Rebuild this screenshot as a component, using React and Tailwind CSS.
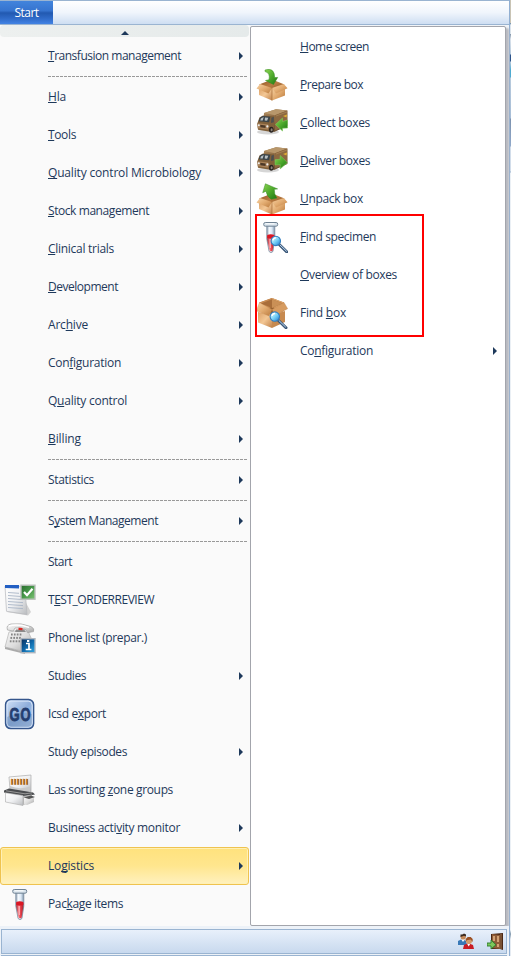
import React from "react";

// label, mnemonic index (-1 for none), has submenu, label width, icon
const left = [
  ["Transfusion management", 0, true, 133], "-",
  ["Hla", 0, true, 18], ["Tools", 0, true, 28], ["Quality control Microbiology", 0, true, 153],
  ["Stock management", 0, true, 101], ["Clinical trials", 0, true, 66], ["Development", 0, true, 70],
  ["Archive", 3, true, 40], ["Configuration", 3, true, 73], ["Quality control", 1, true, 79],
  ["Billing", 0, true, 33], "-", ["Statistics", -1, true, 46], "-",
  ["System Management", 1, true, 110], "-", ["Start", -1, false, 24],
  ["TEST_ORDERREVIEW", 1, false, 106, "review"], ["Phone list (prepar.)", -1, false, 99, "phone"],
  ["Studies", -1, true, 38], ["Icsd export", 6, false, 58, "go"], ["Study episodes", -1, true, 79],
  ["Las sorting zone groups", 12, false, 125, "sorter"], ["Business activity monitor", 13, true, 132],
  ["Logistics", 2, true, 46], ["Package items", 3, false, 75, "tube"],
];
const right = [
  ["Home screen", 0, false, 69], ["Prepare box", 0, false, 63, "pack"], ["Collect boxes", 0, false, 70, "collect"],
  ["Deliver boxes", 0, false, 70, "deliver"], ["Unpack box", 0, false, 63, "unpack"],
  ["Find specimen", 0, false, 76, "findTube"], ["Overview of boxes", 0, false, 97],
  ["Find box", 5, false, 46, "findBox"], ["Configuration", 2, true, 73],
];

function Gradients() {
  const g = (id, a, b, c) => (
    <linearGradient id={id} x1="0" y1="0" x2="1" y2="1">
      <stop stopColor={a} /><stop offset=".5" stopColor={b} /><stop offset="1" stopColor={c} />
    </linearGradient>
  );
  return (
    <svg className="absolute h-0 w-0">
      <defs>
        {g("tan", "#f8d3a4", "#e2ab70", "#b9793c")}
        {g("tanDark", "#8f5524", "#b97c43", "#8f5524")}
        {g("tanSide", "#dba065", "#f3c795", "#c1824a")}
        {g("green", "#8ed653", "#4da92b", "#1d7313")}
        {g("brown", "#b08c60", "#84633d", "#49321d")}
        {g("lens", "#ffffff", "#7ed6f8", "#1877d2")}
        {g("blue", "#d5e4f8", "#8eaedb", "#b4cdee")}
        {g("paper", "#ffffff", "#f0f1f3", "#b9bbbe")}
        {g("grey", "#fafafa", "#dedede", "#a3a3a3")}
        {g("info", "#082c59", "#0e66a8", "#32a9e4")}
        {g("check", "#286b2c", "#47984a", "#7fc475")}
        <linearGradient id="blood"><stop stopColor="#a92c37" /><stop offset=".35" stopColor="#f97b82" /><stop offset=".65" stopColor="#e33b46" /><stop offset="1" stopColor="#a42732" /></linearGradient>
        <linearGradient id="glass"><stop stopColor="#8599ac" /><stop offset=".3" stopColor="#f7fbff" /><stop offset=".65" stopColor="#dbe8f5" /><stop offset="1" stopColor="#7d91a6" /></linearGradient>
      </defs>
    </svg>
  );
}

const Lens = () => (
  <g>
    <path d="M22.5 23.5l7.5 7.3" stroke="#3c5878" strokeWidth="3" strokeLinecap="round" />
    <path d="M23 23.6l6.5 6.3" stroke="#bcd8f3" strokeWidth="1" strokeLinecap="round" />
    <circle cx="18.8" cy="19.6" r="4.7" fill="url(#lens)" stroke="#307dbf" strokeWidth="1.1" />
    <path d="M16 19a3 3 0 013-2.5" stroke="#fff" strokeWidth="1.3" fill="none" />
  </g>
);

const Tube = () => (
  <g>
    <path d="M11.8 4h8v14l-1.8 12q-.4 1.5-2 1.5t-2-1.5l-2.2-12z" fill="url(#glass)" stroke="#7b8da0" strokeWidth=".8" />
    <path d="M12.3 15q3.5-1.3 7 0v4l-1.7 10.5q-1.5 1.7-3 0L12.3 19z" fill="url(#blood)" />
    <path d="M12.2 14q3.6-1.3 7.2 0v3q-3.6 1-7.2 0z" fill="#da1724" />
    <path d="M15.2 18v9" stroke="#ffc1c5" />
    <rect x="8.7" y="1.5" width="14" height="3.7" rx="1.6" fill="#d8e3ec" stroke="#6f8293" />
    <path d="M10.5 2.8h9" stroke="#fff" strokeWidth="1" />
  </g>
);

const Box = () => (
  <g>
    <path d="M3 15.5L16 10.5l12.5 5L16 21z" fill="url(#tanDark)" />
    <path d="M3 18L16 20v11.6L3 26z" fill="url(#tanSide)" />
    <path d="M16 20l13-2v8.4l-13 5.2z" fill="url(#tan)" />
    <path d="M4 15L.5 19.6 12.5 24.6 16 19z" fill="url(#tan)" />
    <path d="M27.8 15l3.7 4.3L20 24.5 16 19z" fill="url(#tan)" />
    <path d="M16 20v11.5" stroke="#a66d38" strokeWidth=".7" />
  </g>
);

const Truck = () => (
  <g>
    <ellipse cx="12" cy="25" rx="11" ry="2.5" fill="#777" opacity=".3" />
    <path d="M8 6L20 2.3l11.3 1.2V19L18 25l-11-4z" fill="url(#brown)" />
    <path d="M8 6L20 2.3l11.3 1.2L19 8.2z" fill="#b8976b" />
    <path d="M19 8.2l12.3-4.7v15L19 23.5z" fill="#8c6840" />
    <path d="M20 9l11-4" stroke="#a98557" strokeWidth=".8" />
    <path d="M3.5 10.5L7 8.5l11 .8v12.5l-4 3-12-2-.8-6z" fill="#80603a" />
    <path d="M3.9 10.8l2.8-1.9 7.6.8-1.2 5.5-10.5-1z" fill="#3a444a" />
    <path d="M4.9 11.5l2.8-1.4-1 3.3-2.4.1zM9 10.5l3.3.3-1.2 3-2.4-.2z" fill="#b9c0c2" />
    <path d="M15.4 10.8l2.4-1v5.5l-2.8.7z" fill="#4a4f50" />
    <path d="M1.7 16.2l10.6 1.4v5.2L1.7 21.2z" fill="#aa835a" />
    <path d="M4.3 17.8l5.2.7v2.4l-5.2-.6z" fill="#4b3827" />
    <circle cx="2.8" cy="18.2" r="1" fill="#eee" /><circle cx="11.4" cy="19.4" r="1.1" fill="#eee" />
    <ellipse cx="15.3" cy="22.8" rx="2.3" ry="3" fill="#292421" /><ellipse cx="15.6" cy="22.8" rx="1" ry="1.5" fill="#8e8378" />
    <path d="M27 9l4-1.5-.5 3z" fill="#dfad35" />
  </g>
);

function Icon({ kind }) {
  return (
    <svg viewBox="0 0 32 32" className="h-8 w-8 shrink-0" fill="none">
      {(kind === "pack" || kind === "unpack") && <Box />}
      {kind === "pack" && <path d="M9 1q9.5-3 9.7 7.6l3-.2-4.2 7.1-8-4 3.5-.8Q14.5 4 9 2.5z" fill="url(#green)" stroke="#378b22" strokeWidth=".5" />}
      {kind === "unpack" && <path d="M9.4.8L6.7 9.7l3.3-1.5q1 5.6 5.4 8.1l5.5-1.2q-3-4.2-2.6-8.8l3.3-.4z" fill="url(#green)" stroke="#378b22" strokeWidth=".5" />}
      {(kind === "collect" || kind === "deliver") && <Truck />}
      {kind === "collect" && <path d="M19.5 17.5l7-6.5v3.5l5-1.5v8l-5 .2V24z" fill="url(#green)" stroke="#7cc75b" strokeWidth=".6" />}
      {kind === "deliver" && <path d="M19 14.7l5.2-.4v-3.8l7.1 7-7.1 6.4v-4.3l-5.2.3z" fill="url(#green)" stroke="#7cc75b" strokeWidth=".6" />}
      {kind === "tube" && <Tube />}
      {kind === "findTube" && <g><g transform="translate(-1)"><Tube /></g><g transform="translate(1 .3)"><Lens /></g></g>}
      {kind === "findBox" && <g>
        <path d="M3.5 5.5L16 1l12 4.5V14L16 18 3.5 14z" fill="#b67a43" />
        <path d="M3.5 5.5L16 1v9L4 15z" fill="#c98d54" />
        <path d="M16 1l12 4.5V14l-12-4z" fill="#dda56b" />
        <path d="M16 10l11 4-11 4-12-4z" fill="#94602f" />
        <path d="M2 15l14 3v13L2 25.5z" fill="url(#tanSide)" />
        <path d="M16 18l13-4v11l-13 6z" fill="#c78a50" />
        <path d="M3.5 5.5L.3 13.8 13 19l3-6.5z" fill="url(#tan)" stroke="#c4884f" strokeWidth=".3" />
        <path d="M28 5.5l3.7 6.2L19 18.5l-3-6z" fill="#d79c61" stroke="#b97c43" strokeWidth=".3" />
        <path d="M5 6.5L16 2.3l10.5 3.9L16 11z" fill="#a96e3a" />
        <path d="M16 2.3l10.5 3.9L16 11z" fill="#ca9056" />
        <Lens />
      </g>}
      {kind === "review" && <g>
        <path d="M3 28l21 3.5L27 28l-5-9z" fill="#aaa" opacity=".5" />
        <path d="M1 2l14 0 6 3 2 25.5L2.5 27.3z" fill="url(#paper)" stroke="#b6b8bb" strokeWidth=".7" />
        <path d="M1 1h14v3.5L1 4z" fill="#225fc3" />
        <path d="M4 8.5l11 .8M4 11.5l13 1M4 14.5l15 1.1M4 17.5l15 1.1M4 20.5l15 1.1M4 23.5l15 1.1" stroke="#a9b6c6" strokeWidth=".9" />
        <rect x="17" y="1.2" width="14" height="14" fill="url(#check)" stroke="#babfbb" strokeWidth="1.4" />
        <path d="M20 8l3 3.2 5.5-6.4" stroke="#fff" strokeWidth="2.2" />
      </g>}
      {kind === "phone" && <g>
        <path d="M5 10L23 7l6 13-7 10L1 25z" fill="url(#grey)" stroke="#b4b4b4" strokeWidth=".7" />
        <path d="M1 25l20 5v2L1 27z" fill="#aaa" />
        <path d="M3.5 8Q1.8 3 7 2q10-1.5 20 2.6 4 2 2.5 5l-6 1.1-1.8-3.2Q16 5 11 6L9.3 9z" fill="url(#grey)" stroke="#a2a2a2" strokeWidth=".7" />
        <path d="M5 4q9-2.5 20 1.4" stroke="#fff" strokeWidth="1.5" />
        <path d="M12 7.5h8l2 2.5H11z" fill="#8c8c8c" /><path d="M14.5 5.8l4 .3v2.2l-4-.3z" fill="#dd2520" />
        {[0, 1, 2].map((r) => [0, 1, 2, 3].map((c) => <rect key={r + "-" + c} x={7 + c * 2.9 - r * 0.6} y={11.5 + r * 3.4} width="1.7" height="2" fill="#858585" />))}
        <rect x="17" y="16.7" width="14" height="14" fill="url(#info)" stroke="#aeb5bd" strokeWidth="1.4" />
        <path d="M22 21.5h3v6m-3.3 0h5.7" stroke="#fff" strokeWidth="1.7" /><rect x="23" y="18" width="2.3" height="2" fill="#fff" />
      </g>}
      {kind === "go" && <g>
        <rect x="1.6" y="1.6" width="28" height="29" rx="5" fill="url(#blue)" stroke="#35568c" strokeWidth="1.5" />
        <rect x="3" y="3.1" width="25.2" height="26" rx="4" stroke="#dbe8fa" />
        <path d="M3 19q13-6 25-3v9q0 4-4 4H7q-4 0-4-4z" fill="#52749f" opacity=".3" />
        <text x="0" y="0" transform="translate(5.4 22.5) scale(.68 1)" fontFamily="Liberation Sans" fontWeight="bold" fontSize="19" letterSpacing="1.5" stroke="#243e70" strokeWidth=".9" fill="#243e70">GO</text>
      </g>}
      {kind === "sorter" && <g>
        <path d="M5 3l22-2v18L6 15z" fill="url(#paper)" stroke="#aaa" strokeWidth=".7" />
        <path d="M6 12q10 4 20 .5V18L6 15z" fill="#c9c9c9" />
        {[0, 1, 2, 3, 4, 5].map((i) => <g key={i}><path d={`M${7.5 + i * 3} 4.8v6`} stroke="#d8861c" strokeWidth="1.5" /><path d={`M${8.6 + i * 3} 5v5.8`} stroke="#612b16" strokeWidth=".7" /></g>)}
        <path d="M0 16.5l5-2 24 4 2 2-12 2L0 18.5z" fill="#4a4c4f" /><path d="M2 16.8l19 3 7-1" stroke="#999" />
        <path d="M1.5 18.8L19 21.5v10L1.5 28z" fill="url(#paper)" stroke="#aaa" strokeWidth=".6" />
        <path d="M19 22l9-1.5v8L19 31z" fill="#b5b5b5" /><path d="M20 24l10-1v5l-7 3-3-1z" fill="url(#grey)" /><path d="M20 23.5l7-2 4 1.5-6 2z" fill="#555" />
      </g>}
    </svg>
  );
}

function Label({ text, u, width }) {
  const ref = React.useRef(null);
  const [spacing, setSpacing] = React.useState(0);
  React.useLayoutEffect(() => {
    ref.current.style.letterSpacing = "0px";
    const value = (width - ref.current.getBoundingClientRect().width) / text.length;
    ref.current.style.letterSpacing = value + "px";
    setSpacing(value);
  }, [text, width]);
  return (
    <span ref={ref} className="whitespace-pre" style={{ letterSpacing: spacing + "px" }}>
      {u < 0 ? text : <>{text.slice(0, u)}<span className="underline decoration-1 underline-offset-1 [text-decoration-skip-ink:none]">{text[u]}</span>{text.slice(u + 1)}</>}
    </span>
  );
}

function Row({ row, side }) {
  if (row === "-") return (
    <div className="h-[3px] pt-px pr-0.5 pl-12"><div className="h-px bg-[repeating-linear-gradient(90deg,#999_0px,#999_3px,transparent_3px,transparent_4px)]" /></div>
  );
  const [text, u, sub, width, icon] = row;
  const active = text === "Logistics";
  return (
    <div className={"flex h-[38px] shrink-0 items-center " + (side === "left" ? "pr-1.5 " : "pr-2 ") + (active ? "rounded-[3px] border border-[#efc34f] bg-linear-to-b from-[#ffe27d] via-[#ffe68e] to-[#fff1bd] shadow-[inset_0_0_0_1px_#fff0b5]" : "")}>
      <div className={"flex shrink-0 " + (side === "left" ? (active ? "w-[47px]" : "w-12 pl-1") : "w-[49px] pl-[5px]")}>{icon && <Icon kind={icon} />}</div>
      <Label text={text} u={u} width={width} />
      {sub && <svg viewBox="0 0 4 8" className={"ml-auto h-2 w-1 " + (active ? "-mr-px" : "")}><path d="M0 0l4 4-4 4z" fill="#1e395b" /></svg>}
    </div>
  );
}

export default function App() {
  return (
    <div className="flex h-[956px] w-[511px] overflow-hidden bg-[#f1f4f8] font-['Open_Sans',sans-serif] text-xs leading-4 text-[#1e395b]">
      <Gradients />
      <div className="flex w-[509px] flex-col">
        <div className="flex h-[25px] shrink-0 border-y border-[#9ab4d1] bg-linear-to-b from-white via-[#f0f5fc] to-[#cedef2]">
          <div className="flex w-[53px] items-center justify-center bg-[linear-gradient(#4284dc_0%,#3674cf_42%,#2259b1_52%,#316dcb_78%,#4383e4_100%)] text-white"><Label text="Start" u={-1} width={24} /></div>
        </div>
        <div className="flex h-[901px] shrink-0">
          <div className="flex w-[250px] flex-col bg-[#fafafa] pr-px">
            <div className="flex h-3 shrink-0 items-center justify-center rounded bg-linear-to-r from-[#edf0ef] to-[#e5eaea] pt-[3px]"><svg viewBox="0 0 8 4" className="h-1 w-2"><path d="M0 4l4-4 4 4z" fill="#1e395b" /></svg></div>
            <div className="flex flex-col">{left.map((r, i) => <Row key={i} row={r} side="left" />)}</div>
          </div>
          <div className="relative mt-px flex w-[256px] flex-col rounded-[2px] border border-[#a3a5ac] bg-white pt-px shadow-[3px_2px_2px_#b8bac1]">
            {right.map((r, i) => <Row key={i} row={r} side="right" />)}
            <div className="absolute top-[187px] left-1 h-[123px] w-[169px] border-2 border-[#f00]" />
          </div>
        </div>
        <div className="relative flex h-[30px] shrink-0 flex-col bg-[#edf2f8] pt-[3px] pr-0.5 pl-px">
          <div className="flex h-[25px] items-center justify-end gap-3 border border-[#9ab4d1] bg-linear-to-b from-[#e8f0fb] to-[#c8d9ee] pr-0.5">
            <svg viewBox="0 0 17 17" className="h-[17px] w-[17px]">
              <path d="M0 8l4-2 4 2 1 4H0z" fill="#3979b7" /><path d="M3 6l2 3 2-3z" fill="#fff" /><circle cx="5.2" cy="4" r="2.6" fill="#c68a59" /><path d="M2.5 4V1.5h2L6 .5l2 1v2L6 2.7z" fill="#3a2a20" />
              <path d="M5 16l1-4 4-2 5 2 1 4z" fill="#c91c24" /><path d="M9 10.5l1.7 3 1.8-3z" fill="#fff" /><circle cx="11" cy="8" r="3" fill="#d49b69" /><path d="M7.7 9.2V6l2-2h3l2 2v3l-2-2.4-4 .6z" fill="#9c5124" />
            </svg>
            <svg viewBox="0 0 17 17" className="h-[17px] w-[17px]">
              <path d="M4 1l12-1v17l-3-1H4z" fill="#4b2815" /><path d="M5 1l8 1v14l-8-1z" fill="#8e5b37" /><path d="M6 3h2v5H6zm4 0h2v6h-2zm0 8h2v3h-2z" fill="#d3a274" /><path d="M14 1v15" stroke="#a67b54" />
              <path d="M0 10h4V7l5 4.8L4 16v-3H0z" fill="#7cc75b" stroke="#287929" strokeWidth=".9" />
            </svg>
          </div>
          <div className="mt-px h-px bg-[#9ab4d1]" />
        </div>
      </div>
      <div className="w-px bg-[#91afd2]" />
      <div className="w-px bg-[linear-gradient(#c9c4b5_0px,#c9c4b5_23px,#5c7f9f_23px,#dce5ee_25px,#dce5ee_34px,#7d91a6_34px,#dce5ee_39px,#b8ccdf_54px,#254f88_55px,#254f88_61px,#b8ccdf_62px,#49aad2_70px,#49aad2_77px,#b8ccdf_78px,#a6bdd8_118px,#788fae_119px,#8fa8cb_146px,#d3dfed_147px,#d3dfed_171px,#9ab4d1_172px,#eef3f8_173px,#eef3f8_930px,#839aaf_934px,#e5ebf2_939px)]" />
    </div>
  );
}
